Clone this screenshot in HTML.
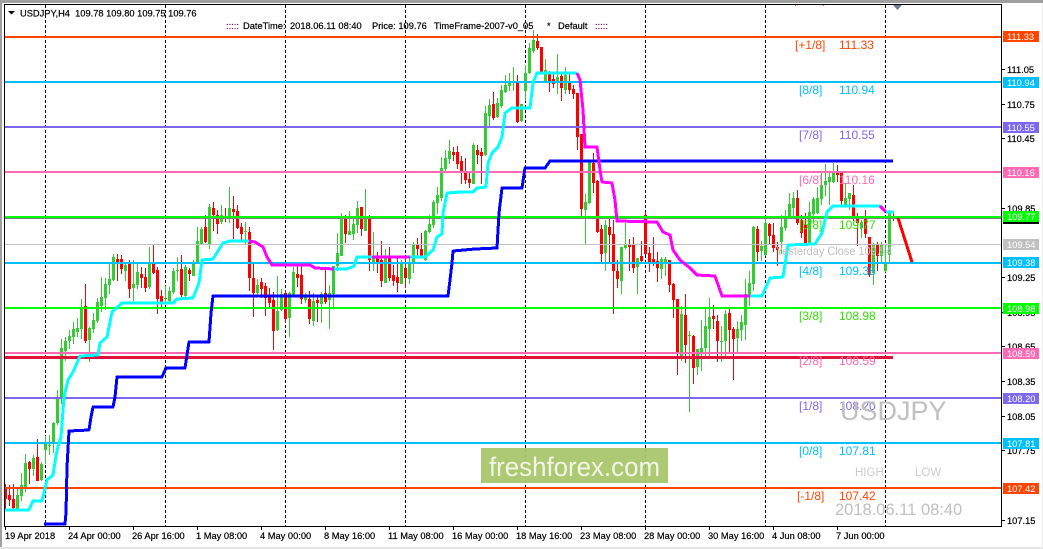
<!DOCTYPE html>
<html><head><meta charset="utf-8"><title>USDJPY,H4</title>
<style>
html,body{margin:0;padding:0;background:#fff;width:1043px;height:549px;overflow:hidden}
svg{display:block}
text{font-family:"Liberation Sans",sans-serif;white-space:pre}
</style></head><body>
<svg xmlns="http://www.w3.org/2000/svg" width="1043" height="549" viewBox="0 0 1043 549">
<rect width="1043" height="549" fill="#fff"/>
<rect width="1043" height="3" fill="#a0a0a0"/>
<rect width="2" height="549" fill="#a0a0a0"/>
<rect y="547" width="1043" height="2" fill="#e6e6e6"/>
<rect x="1042" y="3" width="1" height="546" fill="#ececec"/>
<g stroke="#000" stroke-width="1" stroke-dasharray="3 2" shape-rendering="crispEdges">
<path d="M45.5 5V526M165.5 5V526M285.5 5V526M405.5 5V526M525.5 5V526M645.5 5V526M765.5 5V526M885.5 5V526"/>
</g>
<g fill="none" shape-rendering="crispEdges">
<path stroke="#ff0000" stroke-width="1" d="M5.5 484V509M9.5 485V506M13.5 484V510M29.5 461V484M37.5 439V481M85.5 284V343M117.5 254V281M121.5 255V274M129.5 260V298M141.5 267V288M145.5 268V292M153.5 245V274M157.5 267V314M161.5 290V307M181.5 255V298M189.5 268V281M205.5 215V243M213.5 202V231M217.5 210V234M225.5 208V222M233.5 196V239M237.5 205V229M241.5 223V241M249.5 227V291M253.5 263V317M261.5 278V298M265.5 283V316M269.5 288V308M273.5 292V350M285.5 290V323M297.5 262V287M301.5 263V304M309.5 291V324M317.5 295V322M325.5 270V304M345.5 215V243M361.5 207V236M369.5 215V271M377.5 252V273M381.5 241V287M389.5 247V281M393.5 265V286M397.5 258V292M405.5 257V288M417.5 238V258M421.5 233V258M453.5 147V161M457.5 146V169M461.5 156V184M465.5 158V184M469.5 172V188M477.5 145V164M481.5 148V184M493.5 92V120M517.5 75V123M537.5 34V50M541.5 47V74M549.5 71V92M553.5 73V88M561.5 72V101M569.5 73V94M573.5 85V99M577.5 93V150M581.5 134V218M593.5 153V193M597.5 180V233M601.5 225V263M609.5 218V264M613.5 220V314M617.5 260V288M629.5 239V271M633.5 237V273M641.5 241V262M645.5 212V255M649.5 247V272M653.5 237V266M657.5 252V282M669.5 260V292M673.5 283V318M677.5 299V375M685.5 294V363M693.5 335V384M713.5 305V329M717.5 315V362M729.5 308V353M733.5 327V380M757.5 226V261M769.5 223V244M773.5 223V252M777.5 242V266M797.5 190V225M801.5 215V238M805.5 213V244M837.5 165V182M841.5 172V206M853.5 185V221M857.5 213V246M865.5 210V238M869.5 237V277M877.5 242V271M893.5 213V221"/>
<path stroke="#ff0000" stroke-width="3" d="M5.5 488V499M9.5 495V500M13.5 499V508M29.5 462V469M37.5 457V481M85.5 306V341M117.5 259V262M121.5 259V269M129.5 264V289M141.5 274V278M145.5 277V288M153.5 263V273M157.5 270V299M161.5 296V302M181.5 269V295M189.5 270V274M205.5 227V242M213.5 208V215M217.5 215V224M225.5 217V219M233.5 209V212M237.5 211V228M241.5 227V234M249.5 232V278M253.5 278V293M261.5 282V289M265.5 286V298M269.5 297V303M273.5 300V331M285.5 293V319M297.5 274V278M301.5 275V299M309.5 299V319M317.5 300V303M325.5 293V302M345.5 218V234M361.5 207V229M369.5 218V260M377.5 257V263M381.5 260V281M389.5 257V278M393.5 275V281M397.5 277V283M405.5 268V278M417.5 245V249M421.5 249V256M453.5 152V155M457.5 152V164M461.5 161V172M465.5 173V180M469.5 179V183M477.5 150V155M481.5 152V156M493.5 104V118M517.5 83V122M537.5 41V48M541.5 47V73M549.5 72V83M553.5 79V84M561.5 76V88M569.5 82V90M573.5 89V94M577.5 93V137M581.5 134V209M593.5 163V183M597.5 181V232M601.5 229V254M609.5 227V235M613.5 234V271M617.5 271V279M629.5 245V247M633.5 245V268M641.5 256V261M645.5 215V254M649.5 253V262M653.5 259V264M657.5 261V268M669.5 260V285M673.5 284V300M677.5 299V354M685.5 315V345M693.5 336V368M713.5 316V319M717.5 321V341M729.5 313V330M733.5 329V339M757.5 229V252M769.5 224V236M773.5 235V248M777.5 247V250M797.5 198V223M801.5 220V233M805.5 225V243M837.5 172V175M841.5 173V201M853.5 195V218M857.5 217V223M865.5 218V234M869.5 237V275M877.5 245V256M893.5 217V219"/>
<path stroke="#32cd32" stroke-width="1" d="M17.5 488V510M21.5 473V501M25.5 454V492M33.5 455V476M41.5 462V481M45.5 436V464M49.5 435V455M53.5 422V453M57.5 390V425M61.5 339V404M65.5 337V361M69.5 330V349M73.5 322V344M77.5 318V337M81.5 299V339M89.5 327V362M93.5 313V333M97.5 298V323M101.5 277V312M105.5 278V310M109.5 263V294M113.5 254V281M125.5 263V281M133.5 260V301M137.5 262V289M149.5 247V289M165.5 286V304M169.5 287V304M173.5 268V294M177.5 257V281M185.5 265V297M193.5 260V276M197.5 227V264M201.5 227V244M209.5 204V249M221.5 205V224M229.5 187V223M245.5 222V244M257.5 279V297M277.5 276V331M281.5 289V311M289.5 292V337M293.5 267V297M305.5 293V303M313.5 293V326M321.5 292V323M329.5 285V329M333.5 266V308M337.5 233V271M341.5 213V256M349.5 211V235M353.5 218V240M357.5 201V233M365.5 189V231M373.5 232V271M385.5 249V283M401.5 260V284M409.5 257V284M413.5 242V273M425.5 230V261M429.5 215V233M433.5 200V228M437.5 187V214M441.5 157V201M445.5 150V172M449.5 140V164M473.5 143V184M485.5 106V156M489.5 99V128M497.5 98V118M501.5 85V108M505.5 75V93M509.5 73V91M513.5 67V91M521.5 104V122M525.5 65V101M529.5 43V74M533.5 30V53M545.5 59V83M557.5 54V94M565.5 67V94M585.5 194V244M589.5 162V204M605.5 220V271M621.5 247V294M625.5 223V249M637.5 258V294M661.5 257V279M665.5 257V276M681.5 306V361M689.5 331V412M697.5 349V375M701.5 320V371M705.5 307V358M709.5 298V357M721.5 326V362M725.5 310V358M737.5 321V353M741.5 315V341M745.5 279V340M749.5 271V306M753.5 226V291M761.5 241V261M765.5 218V256M781.5 215V254M785.5 210V231M789.5 193V219M793.5 192V216M809.5 202V244M813.5 197V223M817.5 187V214M821.5 173V205M825.5 164V196M829.5 173V205M833.5 163V183M845.5 183V206M849.5 193V210M861.5 220V238M873.5 243V285M881.5 242V264M885.5 245V272M889.5 210V263"/>
<path stroke="#32cd32" stroke-width="3" d="M17.5 495V509M21.5 485V496M25.5 463V489M33.5 458V469M41.5 464V480M45.5 444V450M49.5 445V446M53.5 423V443M57.5 399V423M61.5 348V399M65.5 341V351M69.5 336V341M73.5 329V337M77.5 328V332M81.5 308V329M89.5 328V340M93.5 320V329M97.5 302V321M101.5 297V306M105.5 284V298M109.5 279V285M113.5 257V280M125.5 265V271M133.5 284V288M137.5 272V285M149.5 263V287M165.5 298V299M169.5 291V301M173.5 271V292M177.5 270V271M185.5 267V296M193.5 264V276M197.5 241V264M201.5 229V244M209.5 207V244M221.5 215V222M229.5 208V219M245.5 231V232M257.5 285V293M277.5 311V330M281.5 294V310M289.5 293V318M293.5 272V296M305.5 295V300M313.5 301V321M321.5 294V304M329.5 293V300M333.5 266V294M337.5 253V266M341.5 218V256M349.5 231V235M353.5 224V234M357.5 208V225M365.5 218V231M373.5 257V262M385.5 257V283M401.5 262V284M409.5 263V279M413.5 245V263M425.5 231V260M429.5 224V232M433.5 202V225M437.5 195V203M441.5 168V198M445.5 158V169M449.5 151V159M473.5 145V184M485.5 113V155M489.5 105V116M497.5 103V117M501.5 90V106M505.5 85V92M509.5 83V86M513.5 82V83M521.5 104V121M525.5 73V91M529.5 48V73M533.5 40V51M545.5 70V83M557.5 77V83M565.5 75V90M585.5 202V210M589.5 162V203M605.5 225V253M621.5 247V281M625.5 245V248M637.5 258V267M661.5 259V269M665.5 259V263M681.5 314V356M689.5 335V336M697.5 349V367M701.5 348V352M705.5 326V348M709.5 317V329M721.5 341V342M725.5 314V341M737.5 329V338M741.5 322V330M745.5 294V325M749.5 283V296M753.5 227V284M761.5 246V251M765.5 223V255M781.5 227V242M785.5 217V228M789.5 204V218M793.5 198V208M809.5 212V243M813.5 199V214M817.5 198V213M821.5 185V199M825.5 181V185M829.5 177V182M833.5 173V182M845.5 198V205M849.5 193V199M861.5 222V228M873.5 245V273M881.5 245V256M885.5 263V271M889.5 213V255"/>
</g>
<g shape-rendering="crispEdges">
<rect x="5" y="36" width="996" height="2" fill="#ff4500"/>
<rect x="5" y="81" width="996" height="2" fill="#00bfff"/>
<rect x="5" y="126" width="996" height="2" fill="#7b68ee"/>
<rect x="5" y="171" width="996" height="2" fill="#ff69b4"/>
<rect x="5" y="218" width="996" height="1" fill="#808080"/>
<rect x="5" y="216" width="996" height="2" fill="#00ff00"/>
<rect x="5" y="244" width="996" height="1" fill="#c0c0c0"/>
<rect x="5" y="262" width="996" height="2" fill="#00bfff"/>
<rect x="5" y="307" width="996" height="2" fill="#00ff00"/>
<rect x="5" y="352" width="996" height="2" fill="#ff69b4"/>
<rect x="5" y="356" width="888" height="3" fill="#dc143c"/>
<rect x="5" y="397" width="996" height="2" fill="#7b68ee"/>
<rect x="5" y="442" width="996" height="2" fill="#00bfff"/>
<rect x="5" y="487" width="996" height="2" fill="#ff4500"/>
</g>
<g fill="none" stroke-width="3" stroke-linejoin="round" shape-rendering="crispEdges">
<path stroke="#0000ff" d="M44 524H65L66 513L67 467L69 431L89 430L91 417L93 407H113L115 397L117 377H162L166 368H185L187 355L189 342H209L211 313L213 296H448L450 280L452 263L453 251L475 249L497 248L499 213L502 188H522L525 168H545L550 161H893"/>
<path stroke="#00ffff" d="M5 510H29L33 501H42L47 480L53 475L57 450L61 437L64 397L68 380L73 372L80 356L98 355L100 343L107 337L112 312L122 303H173L177 299L193 298L199 283L202 260L213 259L223 243L230 241H249"/>
<path stroke="#ff00ff" d="M249 241L255 242L263 247L267 257L272 265H310L315 268L334 269"/>
<path stroke="#00ffff" d="M334 269H347L354 266L357 257H372"/>
<path stroke="#ff00ff" d="M372 257H410"/>
<path stroke="#00ffff" d="M410 257H425L433 250L437 237L442 234L443 213L447 193L460 192H473L477 188L486 187L488 163L492 153L498 147L502 137L505 113L512 108H530L533 83L537 73H577"/>
<path stroke="#ff00ff" d="M577 73L580 80L583 110L585 147H597L600 170L602 182L612 183L615 200L617 221L657 222L663 232L670 235L673 250L680 260L690 268L697 275L715 276L722 296H750"/>
<path stroke="#00ffff" d="M750 296H762L770 278L783 277L788 245L815 244L822 233L827 212L833 206H880"/>
<path stroke="#ff00ff" d="M880 206L886 212"/>
<path stroke="#00ffff" d="M886 212H894"/>
<path stroke="#ff0000" d="M898 218L912 262"/>
</g>
<rect x="4" y="4" width="998" height="1" fill="#000"/>
<rect x="4" y="4" width="1" height="523" fill="#000"/>
<rect x="1001" y="4" width="1" height="523" fill="#000"/>
<rect x="4" y="526" width="998" height="1" fill="#000"/>
<path d="M893 5H902L897.5 10Z" fill="#708090"/>
<path d="M795 5h1v1h-1zM823 5h1v1h-1z" fill="#ff6a20"/>
<path d="M8 11H15L11.5 14.5Z" fill="#000"/>
<rect x="481" y="448" width="187" height="35" fill="#a9c66c" fill-opacity=".95"/>
<text x="489" y="476" font-size="27" textLength="171" lengthAdjust="spacingAndGlyphs" fill="#f2f6e6">freshforex.com</text>
<g font-size="9.3" fill="#000" stroke="#000" stroke-width=".2">
<text x="20" y="16.5">USDJPY,H4  109.78 109.80 109.75 109.76</text>
<text x="226" y="29" fill="#600060" stroke="#600060">:::::</text>
<text x="243" y="29">DateTime:</text>
<text x="290" y="29">2018.06.11 08:40</text>
<text x="372" y="29">Price: 109.76</text>
<text x="434" y="29">TimeFrame-2007-v0_05</text>
<text x="547" y="29">*</text>
<text x="558" y="29">Default</text>
<text x="595" y="29" fill="#600060" stroke="#600060">:::::</text>
<text x="1007" y="73">111.05</text>
<text x="1007" y="108">110.75</text>
<text x="1007" y="142">110.45</text>
<text x="1007" y="212">109.85</text>
<text x="1007" y="281">109.25</text>
<text x="1007" y="316">108.95</text>
<text x="1007" y="350">108.65</text>
<text x="1007" y="385">108.35</text>
<text x="1007" y="420">108.05</text>
<text x="1007" y="454">107.75</text>
<text x="1007" y="524">107.15</text>
<text x="5" y="539">19 Apr 2018</text>
<text x="68" y="539">24 Apr 00:00</text>
<text x="132" y="539">26 Apr 16:00</text>
<text x="196" y="539">1 May 08:00</text>
<text x="260" y="539">4 May 00:00</text>
<text x="324" y="539">8 May 16:00</text>
<text x="388" y="539">11 May 08:00</text>
<text x="452" y="539">16 May 00:00</text>
<text x="516" y="539">18 May 16:00</text>
<text x="580" y="539">23 May 08:00</text>
<text x="644" y="539">28 May 00:00</text>
<text x="708" y="539">30 May 16:00</text>
<text x="772" y="539">4 Jun 08:00</text>
<text x="836" y="539">7 Jun 00:00</text>
</g>
<path stroke="#000" stroke-width="1" shape-rendering="crispEdges" d="M5.5 527V530M69.5 527V530M133.5 527V530M197.5 527V530M261.5 527V530M325.5 527V530M389.5 527V530M453.5 527V530M517.5 527V530M581.5 527V530M645.5 527V530M709.5 527V530M773.5 527V530M837.5 527V530M1002 69.5H1005M1002 104.5H1005M1002 138.5H1005M1002 208.5H1005M1002 277.5H1005M1002 312.5H1005M1002 346.5H1005M1002 381.5H1005M1002 416.5H1005M1002 450.5H1005M1002 520.5H1005"/>
<g shape-rendering="crispEdges">
<rect x="1003" y="31" width="36" height="11" fill="#ff4500"/>
<rect x="1003" y="77" width="36" height="11" fill="#00bfff"/>
<rect x="1003" y="122" width="36" height="11" fill="#7b68ee"/>
<rect x="1003" y="167" width="36" height="11" fill="#ff69b4"/>
<rect x="1003" y="211" width="36" height="11" fill="#00ff00"/>
<rect x="1003" y="222" width="36" height="2" fill="#000"/>
<rect x="1003" y="239" width="36" height="11" fill="#c0c0c0"/>
<rect x="1003" y="257" width="36" height="11" fill="#00bfff"/>
<rect x="1003" y="303" width="36" height="11" fill="#00ff00"/>
<rect x="1003" y="348" width="36" height="11" fill="#ff69b4"/>
<rect x="1003" y="393" width="36" height="11" fill="#7b68ee"/>
<rect x="1003" y="438" width="36" height="11" fill="#00bfff"/>
<rect x="1003" y="483" width="36" height="11" fill="#ff4500"/>
</g>
<g font-size="9.3" fill="#fff">
<text x="1007" y="40">111.33</text>
<text x="1007" y="86">110.94</text>
<text x="1007" y="131">110.55</text>
<text x="1007" y="176">110.16</text>
<text x="1007" y="220">109.77</text>
<text x="1007" y="248">109.54</text>
<text x="1007" y="266">109.38</text>
<text x="1007" y="312">108.98</text>
<text x="1007" y="357">108.59</text>
<text x="1007" y="402">108.20</text>
<text x="1007" y="447">107.81</text>
<text x="1007" y="492">107.42</text>
</g>
<g font-size="12">
<g fill="#ff4500"><text x="795" y="49">[+1/8]</text><text x="839" y="49">111.33</text></g>
<g fill="#00bfff"><text x="799" y="94">[8/8]</text><text x="839" y="94">110.94</text></g>
<g fill="#7b68ee"><text x="799" y="139">[7/8]</text><text x="839" y="139">110.55</text></g>
<g fill="#ff69b4"><text x="799" y="184">[6/8]</text><text x="839" y="184">110.16</text></g>
<g fill="#32e000"><text x="799" y="229">[5/8]</text><text x="839" y="229">109.77</text></g>
<g fill="#00bfff"><text x="799" y="275">[4/8]</text><text x="839" y="275">109.38</text></g>
<g fill="#32e000"><text x="799" y="320">[3/8]</text><text x="839" y="320">108.98</text></g>
<g fill="#ff69b4"><text x="799" y="365">[2/8]</text><text x="839" y="365">108.59</text></g>
<g fill="#7b68ee"><text x="799" y="410">[1/8]</text><text x="839" y="410">108.20</text></g>
<g fill="#00bfff"><text x="799" y="455">[0/8]</text><text x="839" y="455">107.81</text></g>
<g fill="#ff4500"><text x="797" y="500">[-1/8]</text><text x="839" y="500">107.42</text></g>
</g>
<text x="776" y="255" font-size="11.6" textLength="116" lengthAdjust="spacingAndGlyphs" fill="#c0c0c0">Yesterday Close 109.54</text>
<text x="840" y="420" font-size="27" fill="#c0c0c0">USDJPY</text>
<text x="855" y="476" font-size="11.5" fill="#cccccc">HIGH</text>
<text x="915" y="476" font-size="11.5" fill="#cccccc">LOW</text>
<text x="835" y="515" font-size="16.5" fill="#c0c0c0">2018.06.11 08:40</text>
</svg>
</body></html>
